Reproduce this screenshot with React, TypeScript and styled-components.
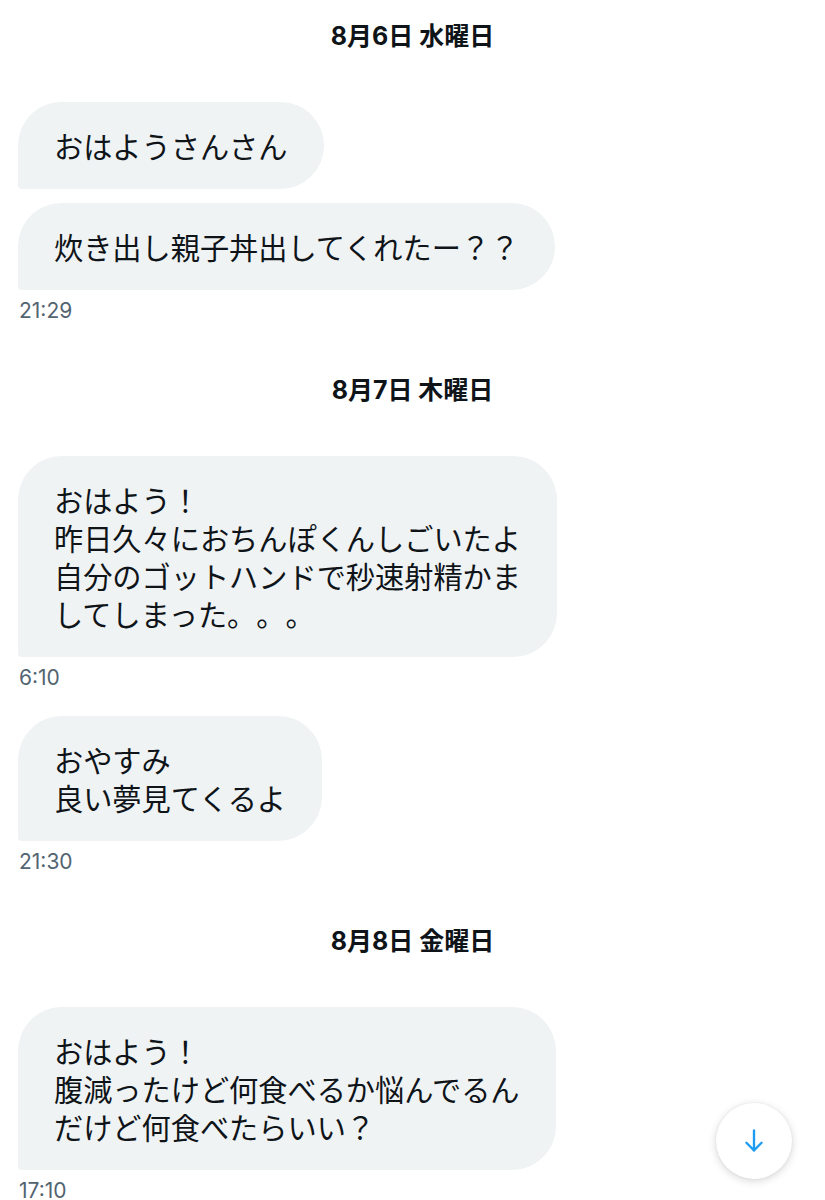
import React from 'react';
import styled, { createGlobalStyle } from 'styled-components';

const GlobalStyle = createGlobalStyle`
  html, body {
    margin: 0;
    padding: 0;
    background: #ffffff;
    overflow: hidden;
  }
  body {
    font-family: Inter, "Noto Sans CJK JP", sans-serif;
    color: #0f1419;
    text-spacing-trim: space-all;
  }
`;

const Page = styled.div`
  position: relative;
  width: 825px;
  height: 1200px;
  overflow: hidden;
  background: #fff;
`;

const Thread = styled.div`
  display: flex;
  flex-direction: column;
  padding: 24px 0 0 18px;
`;

const DateHeader = styled.div<{ $first?: boolean }>`
  align-self: center;
  margin-left: -18px;
  margin-top: ${({ $first }) => ($first ? '0' : '55px')};
  margin-bottom: 54px;
  font-size: 25px;
  line-height: 24px;
  font-weight: 700;
  color: #0f1419;
  white-space: nowrap;
`;

const Bubble = styled.div<{ $gap?: number }>`
  align-self: flex-start;
  max-width: 550px;
  box-sizing: border-box;
  margin-top: ${({ $gap }) => $gap ?? 0}px;
  padding: 24px 36px 25px 36px;
  background: #eff3f4;
  border-radius: 44px 44px 44px 4px;
  font-family: "Noto Sans CJK JP", sans-serif;
  font-size: 29.2px;
  line-height: 38px;
  white-space: pre-wrap;
  text-spacing-trim: space-all;
  color: #0f1419;
`;

const Time = styled.div`
  margin-top: 9px;
  font-size: 21px;
  line-height: 24px;
  color: #536471;
  padding-left: 1px;
`;

const ScrollButton = styled.button`
  position: absolute;
  left: 716px;
  top: 1103px;
  width: 76px;
  height: 76px;
  border: none;
  border-radius: 50%;
  background: #fff;
  box-shadow: 0 2px 8px rgba(0, 0, 0, 0.16), 0 0 3px rgba(0, 0, 0, 0.06);
  display: flex;
  align-items: center;
  justify-content: center;
  padding: 0;
`;

const ArrowDown = () => (
  <svg width="28" height="28" viewBox="0 0 24 24" fill="none" stroke="#1d9bf0" strokeWidth="2" strokeLinecap="round" strokeLinejoin="round">
    <path d="M12 3v17" />
    <path d="M5.5 13.5L12 20l6.5-6.5" />
  </svg>
);

type Msg = { text: string; time?: string };
type Day = { date: string; messages: Msg[] };

const days: Day[] = [
  {
    date: '8月6日 水曜日',
    messages: [
      { text: 'おはようさんさん' },
      { text: '炊き出し親子丼出してくれたー？？', time: '21:29' },
    ],
  },
  {
    date: '8月7日 木曜日',
    messages: [
      {
        text: 'おはよう！\n昨日久々におちんぽくんしごいたよ\n自分のゴットハンドで秒速射精かま\nしてしまった。。。',
        time: '6:10',
      },
      { text: 'おやすみ\n良い夢見てくるよ', time: '21:30' },
    ],
  },
  {
    date: '8月8日 金曜日',
    messages: [
      {
        text: 'おはよう！\n腹減ったけど何食べるか悩んでるん\nだけど何食べたらいい？',
        time: '17:10',
      },
    ],
  },
];

export default function App() {
  return (
    <Page>
      <GlobalStyle />
      <Thread>
        {days.map((day, di) => (
          <React.Fragment key={day.date}>
            <DateHeader $first={di === 0}>{day.date}</DateHeader>
            {day.messages.map((m, mi) => {
              const prev = day.messages[mi - 1];
              const gap = mi === 0 ? 0 : prev?.time ? 26 : 14;
              return (
                <React.Fragment key={mi}>
                  <Bubble $gap={gap}>{m.text}</Bubble>
                  {m.time && <Time>{m.time}</Time>}
                </React.Fragment>
              );
            })}
          </React.Fragment>
        ))}
      </Thread>
      <ScrollButton aria-label="scroll down">
        <ArrowDown />
      </ScrollButton>
    </Page>
  );
}
